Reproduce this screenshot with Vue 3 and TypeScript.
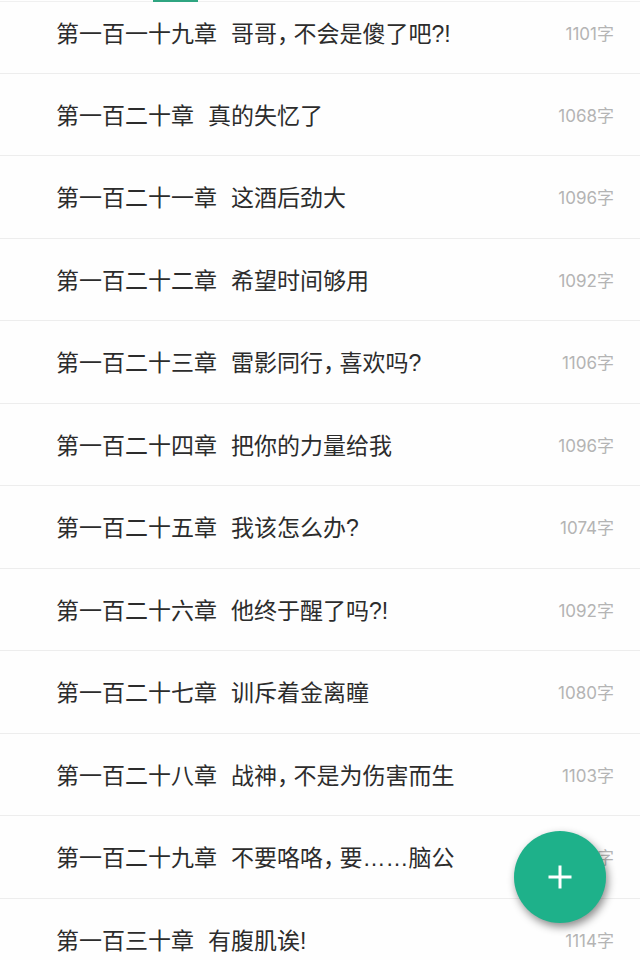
<script setup lang="ts">
interface Chapter {
  label: string
  title: string
  words: number
}

const chapters: Chapter[] = [
  { label: '第一百一十九章', title: '哥哥，不会是傻了吧?!', words: 1101 },
  { label: '第一百二十章', title: '真的失忆了', words: 1068 },
  { label: '第一百二十一章', title: '这酒后劲大', words: 1096 },
  { label: '第一百二十二章', title: '希望时间够用', words: 1092 },
  { label: '第一百二十三章', title: '雷影同行，喜欢吗?', words: 1106 },
  { label: '第一百二十四章', title: '把你的力量给我', words: 1096 },
  { label: '第一百二十五章', title: '我该怎么办?', words: 1074 },
  { label: '第一百二十六章', title: '他终于醒了吗?!', words: 1092 },
  { label: '第一百二十七章', title: '训斥着金离瞳', words: 1080 },
  { label: '第一百二十八章', title: '战神，不是为伤害而生', words: 1103 },
  { label: '第一百二十九章', title: '不要咯咯，要……脑公', words: 1092 },
  { label: '第一百三十章', title: '有腹肌诶!', words: 1114 },
]

// Split around the full-width comma so it can be set narrower than a full em.
const parts = (title: string): string[] => title.split(/(，)/)
</script>

<template>
  <main class="screen">
    <div class="tabs"><span class="indicator"></span></div>
    <ul class="list">
      <li v-for="c in chapters" :key="c.label" class="row">
        <span class="label">{{ c.label }}</span>
        <span class="title"><span v-for="(p, i) in parts(c.title)" :key="i" :class="{ comma: p === '，' }">{{ p }}</span></span>
        <span class="words">{{ c.words }}字</span>
      </li>
    </ul>
    <button class="fab" type="button" aria-label="新建章节">
      <svg viewBox="0 0 24 24" width="24" height="24" aria-hidden="true">
        <path d="M12 0.5V23.5M0.5 12H23.5" fill="none" stroke="#fff" stroke-width="3" />
      </svg>
    </button>
  </main>
</template>

<style>
body {
  background: #fefefe;
}
</style>

<style scoped>
.screen {
  display: flex;
  flex-direction: column;
  height: 100vh;
  overflow: hidden;
  background: #fefefe;
  color: #2c2c2c;
  font-family: "Liberation Sans", "Noto Sans CJK SC", sans-serif;
}

.tabs {
  flex: none;
  display: flex;
  height: 2px;
  padding-left: 153px;
  border-bottom: 1px solid #f0f0f0;
  box-sizing: border-box;
}

.indicator {
  width: 45px;
  height: 2px;
  background: #2fa581;
}

.list {
  flex: 1;
  min-height: 0;
  margin: 0;
  padding: 0;
  overflow: hidden;
  list-style: none;
}

.row {
  display: flex;
  align-items: center;
  gap: 14px;
  padding: 30px 26px 27px 56px;
  border-bottom: 1px solid #ededed;
  font-size: 23px;
  line-height: 24px;
  white-space: nowrap;
}

.row:nth-child(odd) {
  padding-bottom: 28px;
}

.row:first-child {
  padding-top: 20px;
  padding-bottom: 27px;
}

.title {
  flex: 1;
}

.comma {
  margin-right: 5px;
  font-feature-settings: "halt";
}

.words {
  color: #b4b4b4;
  font-family: Inter, "Noto Sans CJK SC", sans-serif;
  font-size: 17px;
  font-weight: 400;
}

.fab {
  position: fixed;
  right: 34px;
  bottom: 37px;
  display: grid;
  place-items: center;
  width: 92px;
  height: 92px;
  padding: 0;
  border: 0;
  border-radius: 50%;
  background: #1eb18a;
  box-shadow: 2px 4px 8px rgba(0, 0, 0, 0.45);
  cursor: pointer;
}
</style>
